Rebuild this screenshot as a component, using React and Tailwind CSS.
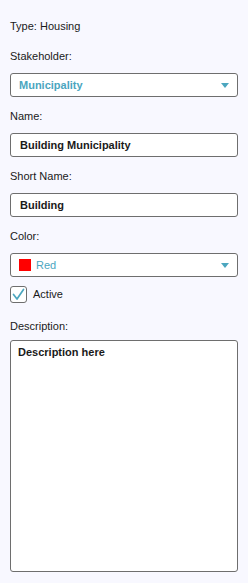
export default function App() {
  return (
    <div className="h-[583px] w-[248px] bg-[#f8f8ff] px-[10px] text-[11px] leading-[13px] text-[#1a1a1a] font-['Liberation_Sans',Arial,sans-serif]">
      <div className="pt-[20px]">Type: Housing</div>

      <div className="mt-[17px]">Stakeholder:</div>
      <div className="mt-[10px] flex h-[24px] items-center justify-between rounded-[3px] border border-[#6e6e6e] bg-white pl-[8px] pr-[8px]">
        <span className="font-bold text-[#4ba6bf]">Municipality</span>
        <Arrow />
      </div>

      <div className="mt-[13px]">Name:</div>
      <div className="mt-[10px] flex h-[24px] items-center rounded-[3px] border border-[#6e6e6e] bg-white pl-[9px]">
        <span className="font-bold">Building Municipality</span>
      </div>

      <div className="mt-[13px]">Short Name:</div>
      <div className="mt-[10px] flex h-[24px] items-center rounded-[3px] border border-[#6e6e6e] bg-white pl-[9px]">
        <span className="font-bold">Building</span>
      </div>

      <div className="mt-[13px]">Color:</div>
      <div className="mt-[10px] flex h-[24px] items-center justify-between rounded-[3px] border border-[#6e6e6e] bg-white pl-[8px] pr-[8px]">
        <div className="flex items-center gap-[5px]">
          <span className="h-[12px] w-[12px] bg-[#ff0000]" />
          <span className="text-[#4ba6bf]">Red</span>
        </div>
        <Arrow />
      </div>

      <div className="mt-[9px] flex items-center gap-[6px]">
        <div className="flex h-[17px] w-[17px] items-center justify-center rounded-[3px] border border-[#6e6e6e] bg-white">
          <svg width="13" height="13" viewBox="0 0 13 13" fill="none">
            <path d="M1.5 6.5 L5 11 L11.5 1.5" stroke="#4ba6bf" strokeWidth="1.7" strokeLinecap="round" strokeLinejoin="round" />
          </svg>
        </div>
        <span>Active</span>
      </div>

      <div className="mt-[17px]">Description:</div>
      <div className="mt-[7px] h-[232px] rounded-[3px] border border-[#6e6e6e] bg-white pl-[7px] pt-[5px]">
        <span className="font-bold">Description here</span>
      </div>
    </div>
  );
}

function Arrow() {
  return (
    <svg width="8" height="5" viewBox="0 0 8 5">
      <path d="M0 0 H8 L4 5 Z" fill="#4ba6bf" />
    </svg>
  );
}
